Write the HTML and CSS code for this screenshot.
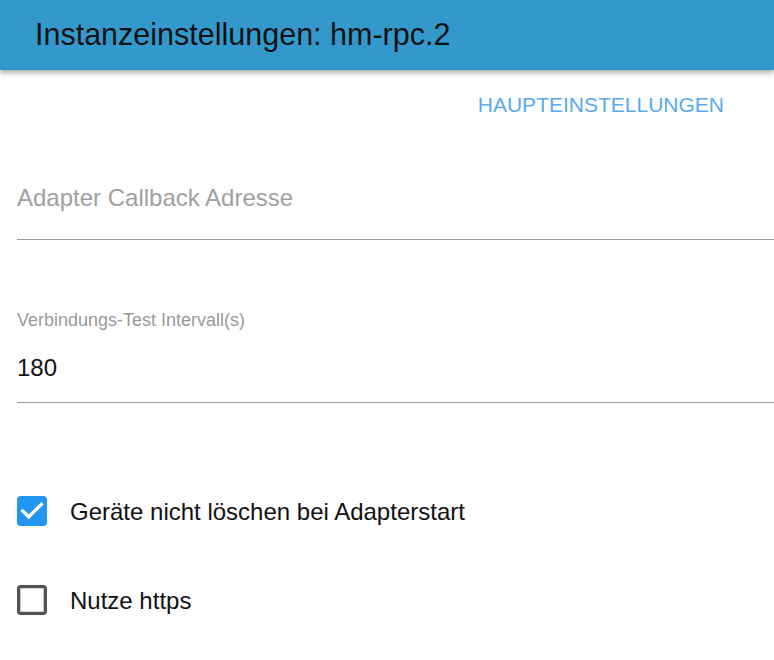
FILE: index.html
```html
<!DOCTYPE html>
<html lang="de">
<head>
<meta charset="utf-8">
<title>Instanzeinstellungen: hm-rpc.2</title>
<link rel="stylesheet" href="styles.css">
</head>
<body>
<header class="appbar">
  <h1 class="title">Instanzeinstellungen: hm-rpc.2</h1>
</header>
<nav class="tabs">
  <span class="tab">HAUPTEINSTELLUNGEN</span>
</nav>
<main class="form">
  <div class="field field-empty">
    <div class="placeholder">Adapter Callback Adresse</div>
  </div>
  <div class="field field-filled">
    <div class="label">Verbindungs-Test Intervall(s)</div>
    <div class="value">180</div>
  </div>
  <label class="check check-first">
    <svg class="box" viewBox="0 0 24 24" width="40" height="40"><path class="box-on" d="M19 3H5c-1.11 0-2 .9-2 2v14c0 1.1.89 2 2 2h14c1.11 0 2-.9 2-2V5c0-1.1-.89-2-2-2zm-9 14l-5-5 1.41-1.41L10 14.17l7.59-7.59L19 8l-9 9z"/></svg>
    <span class="check-text">Geräte nicht löschen bei Adapterstart</span>
  </label>
  <label class="check check-second">
    <svg class="box" viewBox="0 0 24 24" width="40" height="40"><path class="box-off" d="M19 5v14H5V5h14m0-2H5c-1.1 0-2 .9-2 2v14c0 1.1.9 2 2 2h14c1.1 0 2-.9 2-2V5c0-1.1-.9-2-2-2z"/></svg>
    <span class="check-text">Nutze https</span>
  </label>
</main>
</body>
</html>
```
FILE: styles.css
```css
html, body {
  margin: 0;
  padding: 0;
  background: #ffffff;
  font-family: "Liberation Sans", Arial, sans-serif;
  overflow: hidden;
}

.appbar {
  height: 70px;
  background: #3399cc;
  box-shadow: 0 2px 4px -1px rgba(0,0,0,0.2), 0 4px 5px 0 rgba(0,0,0,0.14), 0 1px 10px 0 rgba(0,0,0,0.12);
  display: flex;
  align-items: center;
  padding: 0 0 1px 35px;
  box-sizing: border-box;
  position: relative;
  z-index: 1;
}

.title {
  margin: 0;
  font-size: 30.5px;
  font-weight: normal;
  color: #111;
  white-space: nowrap;
}

.tabs {
  height: 70px;
  display: flex;
  justify-content: flex-end;
  align-items: center;
  padding-right: 50px;
}

.tab {
  font-size: 21px;
  color: #5aaaee;
  line-height: 24px;
}

.form {
  padding-left: 17px;
}

.field {
  border-bottom: 1px solid #999999;
}

.field-empty {
  margin-top: 44px;
  padding-bottom: 27px;
}

.placeholder {
  font-size: 24px;
  line-height: 28px;
  color: #a0a0a0;
}

.field-filled {
  margin-top: 69px;
  padding-bottom: 20px;
}

.label {
  font-size: 18px;
  line-height: 22px;
  color: #9a9a9a;
}

.value {
  margin-top: 23px;
  font-size: 24px;
  line-height: 28px;
  color: #111;
}

.check {
  display: flex;
  align-items: center;
  height: 40px;
  margin-left: -5px;
}

.check-first {
  margin-top: 88px;
}

.check-second {
  margin-top: 49px;
}

.box {
  display: block;
  flex: none;
}

.box-on {
  fill: #2196f3;
}

.box-off {
  fill: #555555;
}

.check-text {
  margin-left: 18px;
  font-size: 24px;
  line-height: 28px;
  color: #111;
  padding-top: 2px;
}
```
